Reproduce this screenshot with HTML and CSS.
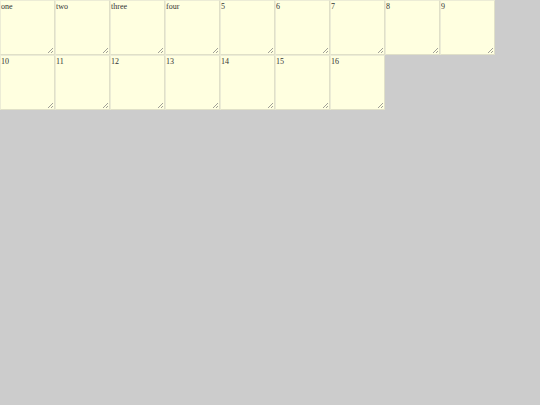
FILE: index.html
```html
<!DOCTYPE html>
<html>
<head>
<meta charset="utf-8">
<link rel="stylesheet" href="styles.css">
</head>
<body>
<div class="grid">
<textarea class="note">one</textarea><textarea class="note">two</textarea><textarea class="note">three</textarea><textarea class="note">four</textarea><textarea class="note">5</textarea><textarea class="note">6</textarea><textarea class="note">7</textarea><textarea class="note">8</textarea><textarea class="note">9</textarea><textarea class="note">10</textarea><textarea class="note">11</textarea><textarea class="note">12</textarea><textarea class="note">13</textarea><textarea class="note">14</textarea><textarea class="note">15</textarea><textarea class="note">16</textarea>
</div>
</body>
</html>
```
FILE: styles.css
```css
html, body {
  margin: 0;
  padding: 0;
  background: #cccccc;
}
.grid {
  display: flex;
  flex-wrap: wrap;
  width: 495px;
}
.note {
  box-sizing: border-box;
  width: 55px;
  height: 55px;
  margin: 0;
  padding: 1px 0 0 0;
  border: 1px solid #ececd6;
  border-right-color: #e0e0c8;
  border-bottom-color: #e0e0c8;
  background-color: #ffffe0;
  background-image: linear-gradient(135deg, transparent 0, transparent 45%, #a0a098 45%, #a0a098 58%, transparent 58%, transparent 72%, #a0a098 72%, #a0a098 85%, transparent 85%);
  background-size: 5px 5px;
  background-position: right 1px bottom 1px;
  background-repeat: no-repeat;
  resize: none;
  overflow: hidden;
  color: #333;
  font-family: "Liberation Serif", serif;
  font-size: 8px;
  line-height: 1.2;
  outline: none;
}
```
